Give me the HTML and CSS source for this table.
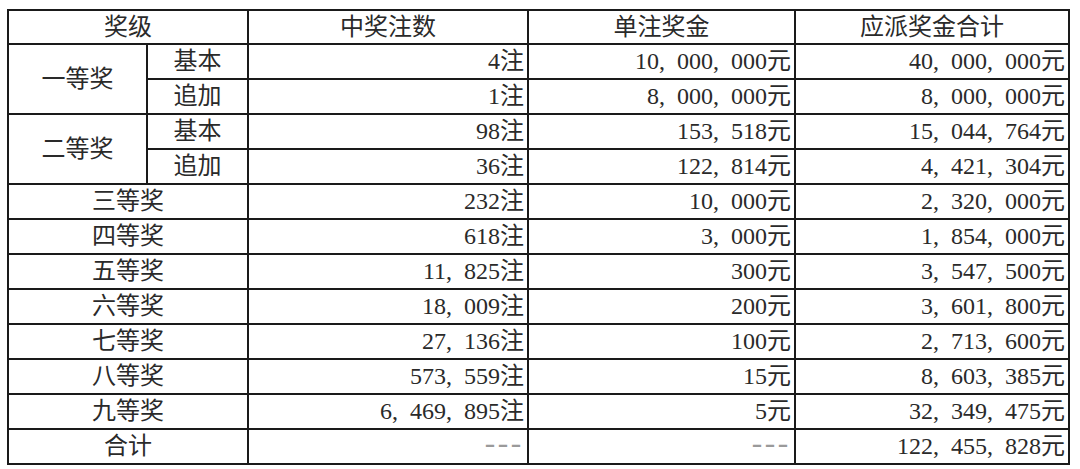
FILE: index.html
```html
<!DOCTYPE html>
<html lang="zh-CN">
<head>
<meta charset="utf-8">
<link rel="stylesheet" href="styles.css">
</head>
<body>
<table class="prize">
  <colgroup>
    <col class="c-a"><col class="c-b"><col class="c-c"><col class="c-d"><col class="c-e">
  </colgroup>
  <tr class="head">
    <th colspan="2">奖级</th>
    <th>中奖注数</th>
    <th>单注奖金</th>
    <th>应派奖金合计</th>
  </tr>
  <tr>
    <td rowspan="2" class="mid">一等奖</td>
    <td class="mid">基本</td>
    <td class="num">4注</td>
    <td class="num">10,&#8194;000,&#8194;000元</td>
    <td class="num">40,&#8194;000,&#8194;000元</td>
  </tr>
  <tr>
    <td class="mid">追加</td>
    <td class="num">1注</td>
    <td class="num">8,&#8194;000,&#8194;000元</td>
    <td class="num">8,&#8194;000,&#8194;000元</td>
  </tr>
  <tr>
    <td rowspan="2" class="mid">二等奖</td>
    <td class="mid">基本</td>
    <td class="num">98注</td>
    <td class="num">153,&#8194;518元</td>
    <td class="num">15,&#8194;044,&#8194;764元</td>
  </tr>
  <tr>
    <td class="mid">追加</td>
    <td class="num">36注</td>
    <td class="num">122,&#8194;814元</td>
    <td class="num">4,&#8194;421,&#8194;304元</td>
  </tr>
  <tr>
    <td colspan="2" class="mid">三等奖</td>
    <td class="num">232注</td>
    <td class="num">10,&#8194;000元</td>
    <td class="num">2,&#8194;320,&#8194;000元</td>
  </tr>
  <tr>
    <td colspan="2" class="mid">四等奖</td>
    <td class="num">618注</td>
    <td class="num">3,&#8194;000元</td>
    <td class="num">1,&#8194;854,&#8194;000元</td>
  </tr>
  <tr>
    <td colspan="2" class="mid">五等奖</td>
    <td class="num">11,&#8194;825注</td>
    <td class="num">300元</td>
    <td class="num">3,&#8194;547,&#8194;500元</td>
  </tr>
  <tr>
    <td colspan="2" class="mid">六等奖</td>
    <td class="num">18,&#8194;009注</td>
    <td class="num">200元</td>
    <td class="num">3,&#8194;601,&#8194;800元</td>
  </tr>
  <tr>
    <td colspan="2" class="mid">七等奖</td>
    <td class="num">27,&#8194;136注</td>
    <td class="num">100元</td>
    <td class="num">2,&#8194;713,&#8194;600元</td>
  </tr>
  <tr>
    <td colspan="2" class="mid">八等奖</td>
    <td class="num">573,&#8194;559注</td>
    <td class="num">15元</td>
    <td class="num">8,&#8194;603,&#8194;385元</td>
  </tr>
  <tr>
    <td colspan="2" class="mid">九等奖</td>
    <td class="num">6,&#8194;469,&#8194;895注</td>
    <td class="num">5元</td>
    <td class="num">32,&#8194;349,&#8194;475元</td>
  </tr>
  <tr>
    <td colspan="2" class="mid">合计</td>
    <td class="num dash">---</td>
    <td class="num dash">---</td>
    <td class="num">122,&#8194;455,&#8194;828元</td>
  </tr>
</table>
</body>
</html>
```
FILE: styles.css
```css
html, body {
  margin: 0;
  padding: 0;
  background: #ffffff;
}
body {
  padding: 9px 0 0 7px;
}
.prize {
  border-collapse: collapse;
  table-layout: fixed;
  width: 1061px;
  font-family: "Liberation Serif", "Noto Sans CJK SC", serif;
  font-size: 24px;
  color: #2a2a2a;
}
.c-a { width: 139px; }
.c-b { width: 101px; }
.c-c { width: 280px; }
.c-d { width: 267px; }
.c-e { width: 274px; }
.prize th, .prize td {
  border: 2px solid #1a1a1a;
  padding: 0 3px;
  height: 35px;
  box-sizing: border-box;
  line-height: 31px;
  font-weight: normal;
  white-space: nowrap;
  overflow: hidden;
}
.prize .head th {
  height: 34px;
  text-align: center;
}
.mid {
  text-align: center;
}
.num {
  text-align: right;
}
.prize .dash {
  color: #9a9a9a;
  font-family: "Liberation Mono", monospace;
  font-size: 30px;
  letter-spacing: -5px;
  padding-right: 7px;
}
```
